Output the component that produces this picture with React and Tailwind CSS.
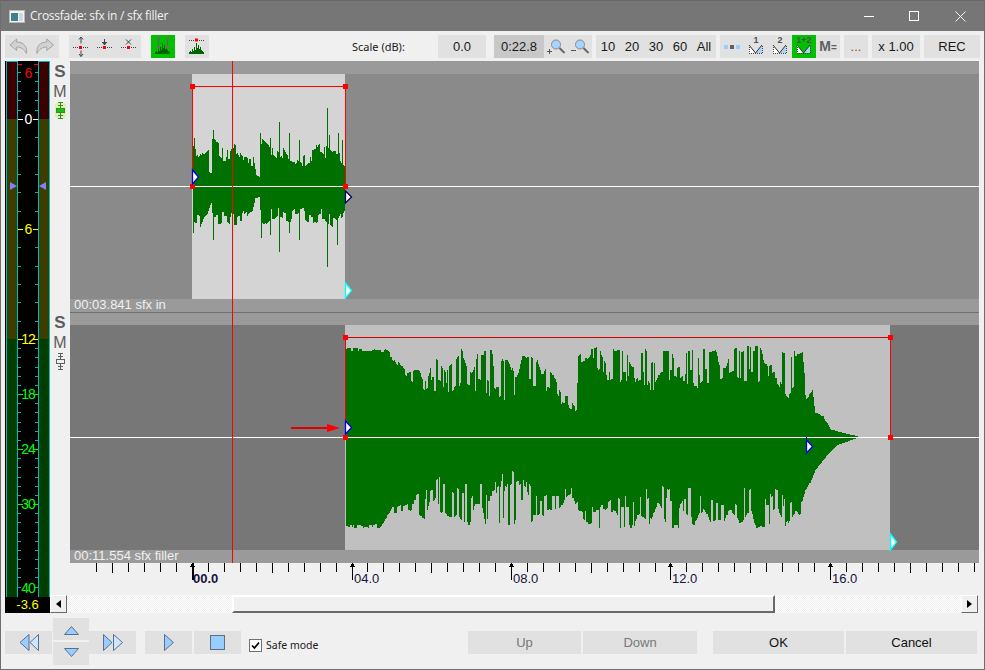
const ARIAL = 'font-["Liberation_Sans",Arial,sans-serif]'

const BTN_BG = 'bg-[#e1e1e1]'

// amplitude keypoints read off the picture, in page coordinates
// top / bottom = the solid core, outerTop / outerBottom = how far the peaks reach
const WAVE1_TOP = [[193,153],[200,152],[205,157],[208,158],[209,172],[211,173],[212,147],[217,150],[223,157],[230,158],[233,150],[240,157],[248,160],[253,165],[256,175],[259,177],[260,145],[267,152],[275,157],[278,160],[283,155],[293,158],[303,163],[312,157],[320,152],[327,155],[337,152],[343,165],[345,167]]
const WAVE1_BOTTOM = [[193,213],[200,218],[207,213],[211,200],[213,218],[223,215],[233,217],[243,213],[252,210],[255,198],[259,197],[261,216],[270,214],[278,208],[290,214],[303,211],[313,216],[323,211],[337,222],[343,215],[345,205]]

const WAVE1 = {
  x0: 193, x1: 345, cy: 186, seed: 7,
  top: WAVE1_TOP.map(([x, y]) => [x, y > 170 ? y : y + 5]),
  bottom: WAVE1_BOTTOM.map(([x, y]) => [x, y < 200 ? y : y - 5]),
  outerTop: WAVE1_TOP.map(([x, y]) => [x, y - (y > 170 ? 0 : 9)]),
  outerBottom: WAVE1_BOTTOM.map(([x, y]) => [x, y + (y < 200 ? 0 : 9)]),
  spikesTop: { 194: 138, 213: 130, 233: 148, 260: 133, 270: 138, 279: 122, 289: 133, 299: 140, 316: 145, 327: 108, 329: 135, 338: 133, 342: 140 },
  spikesBottom: { 193: 233, 213: 240, 261: 238, 270: 235, 279: 252, 289: 233, 299: 240, 327: 267, 337: 245 },
}

const WAVE2 = {
  x0: 346, x1: 858, cy: 437, seed: 23,
  top: [[346,353],[385,352],[393,362],[405,379],[415,388],[425,395],[440,392],[447,402],[470,395],[478,395],[493,407],[512,403],[530,395],[556,402],[570,412],[576,412],[578,368],[590,358],[605,385],[640,385],[653,402],[675,385],[690,392],[710,385],[730,385],[757,385],[770,380],[788,405],[800,395],[805,402],[812,392],[815,413],[823,418],[830,430],[843,433],[857,436]],
  bottom: [[346,524],[380,524],[392,507],[407,500],[420,490],[445,470],[460,480],[490,480],[512,465],[530,480],[545,490],[563,490],[577,477],[578,505],[595,505],[617,490],[640,490],[655,478],[675,490],[690,485],[710,490],[730,492],[755,480],[788,490],[805,485],[810,483],[815,470],[827,455],[837,445],[857,438]],
  outerTop: [[346,348],[385,348],[395,358],[408,372],[425,362],[432,352],[445,368],[452,350],[470,346],[490,350],[520,350],[545,358],[568,395],[576,410],[578,355],[590,344],[625,350],[640,346],[680,344],[720,348],[745,344],[770,347],[802,349],[806,395],[812,388],[815,411],[823,416],[830,429],[843,433],[857,436]],
  outerBottom: [[346,528],[380,528],[392,515],[407,510],[428,525],[445,515],[470,530],[490,525],[520,528],[545,515],[577,505],[578,518],[595,531],[640,528],[680,529],[720,525],[745,529],[790,529],[803,515],[806,490],[815,470],[827,455],[837,445],[857,438]],
  spikesTop: {},
  spikesBottom: {},
}

function interp(points, x) {
  for (let i = 1; i < points.length; i++) {
    if (x <= points[i][0]) {
      const [ax, ay] = points[i - 1]
      const [bx, by] = points[i]
      return ay + ((by - ay) * (x - ax)) / (bx - ax || 1)
    }
  }
  return points[points.length - 1][1]
}

function wavePath({ x0, x1, cy, seed, top, bottom, outerTop, outerBottom, spikesTop, spikesBottom }) {
  let s = seed
  const rand = () => {
    s = (s * 16807) % 2147483647
    return s / 2147483647
  }
  const pick = () => (rand() < 0.58 ? 0.84 + 0.16 * rand() : 0.05 + 0.45 * rand())
  // slow swell, so the peaks come in bunches with valleys between them
  const swell = (x, p) => Math.min(1, Math.max(0.5, 0.95 + 0.6 * Math.sin(x * 0.21 + p) * Math.sin(x * 0.067 + p * 2)))
  let fa = 1
  let fb = 1
  let runA = 0
  let runB = 0
  let d = ''
  for (let x = x0; x < x1; x++) {
    if (runA-- <= 0) {
      fa = pick()
      runA = Math.floor(rand() * 2.6)
    }
    if (runB-- <= 0) {
      fb = pick()
      runB = Math.floor(rand() * 2.6)
    }
    const coreA = cy - interp(top, x)
    const coreB = interp(bottom, x) - cy
    const a = coreA + Math.max(0, cy - interp(outerTop, x) - coreA) * fa * swell(x, 0.4)
    const b = coreB + Math.max(0, interp(outerBottom, x) - cy - coreB) * fb * swell(x, 1.9)
    const y1 = spikesTop[x] ?? Math.round(cy - a)
    const y2 = spikesBottom[x] ?? Math.round(cy + b)
    d += `M${x} ${y1}h1V${y2}h-1z`
  }
  return d
}

function Marker({ x, y, h = 14, color = '#0000e0' }) {
  return (
    <polygon
      points={`${x + 0.5},${y} ${x + 6.5},${y + h / 2} ${x + 0.5},${y + h}`}
      fill="#fff"
      stroke={color}
      strokeWidth="1.3"
    />
  )
}

function Handle({ x, y }) {
  return <rect x={x - 2.5} y={y - 2.5} width="5" height="5" fill="#ff0000" />
}

function Clip({ left, width, bg, wave, viewBox }) {
  return (
    <div className="flex h-[225px] flex-1">
      <div className={left} />
      <div className={`${width} ${bg}`}>
        <svg className="block h-full w-full" viewBox={viewBox} shapeRendering="crispEdges">
          <path d={wavePath(wave)} fill="#007000" />
        </svg>
      </div>
    </div>
  )
}

function ChannelIcon({ active }) {
  const c = active ? '#3f8a1c' : '#606060'
  return (
    <svg width="11" height="17" viewBox="0 0 11 17" className="block" shapeRendering="crispEdges">
      {active && <rect x="0" y="1" width="11" height="15" rx="3" fill="#d6f2b8" />}
      <path d="M3 0.500h5M5.500 0.500v6M3 3.500h5M5.500 10.500v6M3 16.500h5M3 13.500h5" stroke={c} fill="none" />
      <rect x="1.500" y="6.500" width="8" height="4" fill={active ? '#16c016' : '#f0f0f0'} stroke={c} />
    </svg>
  )
}

function SideButtons({ active, top }) {
  return (
    <div className={`flex w-[20px] flex-col items-center bg-[#f0f0f0] ${ARIAL} text-[#5c5c5c] ${top}`}>
      <span className="h-[20px] text-[17px] leading-[20px] font-bold">S</span>
      <span className="h-[20px] text-[16px] leading-[20px]">M</span>
      <ChannelIcon active={active} />
    </div>
  )
}

function Track({ label, body, children, active, h, stripe, top }) {
  return (
    <div className={`flex ${h}`}>
      <SideButtons active={active} top={top} />
      <div className="flex w-[909px] flex-col">
        <div className={`${stripe} bg-[#9a9a9a]`} />
        <div className={`flex h-[225px] ${body}`}>{children}</div>
        <div className={`h-[13px] bg-[#9a9a9a] pl-[4px] ${ARIAL} text-[13px] leading-[11px] text-[#f0f0f0]`}>{label}</div>
      </div>
    </div>
  )
}

const METER_LABELS = [
  { text: '6', cls: 'top-[4px] text-[#ff0000]' },
  { text: '0', cls: 'top-[50px] text-white' },
  { text: '6', cls: 'top-[160px] text-[#ffff00]' },
  { text: '12', cls: 'top-[270px] text-[#ffff00]' },
  { text: '18', cls: 'top-[325px] text-[#00ff00]' },
  { text: '24', cls: 'top-[380px] text-[#00ff00]' },
  { text: '30', cls: 'top-[435px] text-[#00ff00]' },
  { text: '40', cls: 'top-[519px] text-[#00ff00]' },
]

function meterTicks() {
  const ys = []
  for (let i = 0; i < 6; i++) ys.push(119 - i * 9.4)
  for (let i = 1; i < 12; i++) ys.push(119 + i * 18.33)
  for (let i = 0; i < 28; i++) ys.push(339 + i * 9.17)
  return ys.map((y) => Math.round(y) - 61)
}

const MAJOR_TICKS = [
  { y: 58, c: '#ffffff' },
  { y: 168, c: '#ffff00' },
  { y: 278, c: '#ffff00' },
  { y: 333, c: '#00ff00' },
  { y: 388, c: '#00ff00' },
  { y: 443, c: '#00ff00' },
]

function MeterBar() {
  return (
    <div className="flex h-full w-[12px] flex-col border border-b-0 border-[#00bcbc]">
      <div className="h-[57px] bg-[#3d0000]" />
      <div className="h-[220px] bg-[#3d3d00]" />
      <div className="flex-1 bg-[#003d00]" />
    </div>
  )
}

function Meter() {
  return (
    <div className="flex w-[45px] flex-col bg-black">
      <div className="relative flex h-[536px] pl-px">
        <MeterBar />
        <div className="w-[20px]" />
        <MeterBar />
        <svg className="absolute inset-0" width="45" height="536" shapeRendering="crispEdges">
          {meterTicks().map((y) => (
            <path key={y} d={`M13 ${y}.5h3M30 ${y}.5h3`} stroke="#00b4b4" />
          ))}
          <path d="M13 3.500h4M29 3.500h4" stroke="#ff0000" />
          {MAJOR_TICKS.map((t) => (
            <path key={t.y} d={`M13 ${t.y}.5h5M28 ${t.y}.5h5`} stroke={t.c} />
          ))}
          <g shapeRendering="auto">
            <polygon points="5,121 5,129 12,125" fill="#8080ff" />
            <polygon points="41,121 41,129 34,125" fill="#8080ff" />
          </g>
        </svg>
        {METER_LABELS.map((l, i) => (
          <span
            key={i}
            className={`absolute left-0 w-[46px] text-center ${ARIAL} text-[14px] leading-[16px] tracking-[-1px] ${l.cls}`}
          >
            {l.text}
          </span>
        ))}
      </div>
      <div className={`h-[16px] text-center ${ARIAL} text-[13px] leading-[16px] text-[#ffff00]`}>-3.6</div>
    </div>
  )
}

function WaveIcon({ color = '#006400' }) {
  return (
    <path
      d="M4 19v-2h1v-1h1v1h1v-3h1v2h1v-4h1v3h1v-7h1v5h1v-3h1v4h1v-2h1v3h1v1h1v1h1v2z"
      fill={color}
      shapeRendering="crispEdges"
    />
  )
}

function Icon24({ children, className = '' }) {
  return (
    <svg width="24" height="23" viewBox="0 0 24 23" className={`block shrink-0 ${className}`}>
      {children}
    </svg>
  )
}

function DotLine({ y = 12 }) {
  return <path d={`M4 ${y}.5h16`} stroke="#444" strokeDasharray="1 1" shapeRendering="crispEdges" />
}

function ToolIcons() {
  return (
    <div className={`flex w-[72px] ${BTN_BG}`}>
      <Icon24>
        <DotLine />
        <path d="M12 9V2.500M12 16v6M10 5l2-2.500L14 5M10 19.500l2 2.500 2-2.500" transform="translate(0 -0.500)" stroke="#444" fill="none" />
        <rect x="10" y="11" width="3" height="3" fill="#f00" />
      </Icon24>
      <Icon24>
        <DotLine />
        <path d="M11.500 4v6M9 7.500h5M9.500 7l2 3 2-3" stroke="#444" fill="none" />
        <rect x="10" y="11" width="3" height="3" fill="#f00" />
      </Icon24>
      <Icon24>
        <DotLine />
        <path d="M9 4.500l5 5M14 4.500l-5 5" stroke="#444" fill="none" />
        <rect x="10" y="11" width="3" height="3" fill="#f00" />
      </Icon24>
    </div>
  )
}

function Zoom({ minus }) {
  return (
    <Icon24>
      <circle cx="12" cy="9.500" r="4.500" fill="#a6d4ff" stroke="#8a8a8a" />
      <path d="M15.500 13l5 5" stroke="#666" strokeWidth="2" />
      <path d={minus ? 'M3 15.500h5' : 'M3 16.500h5M5.500 14v5'} stroke="#555" />
    </Icon24>
  )
}

function FadeIcon({ label, on }) {
  return (
    <Icon24 className={on ? 'bg-[#00c000]' : ''}>
      <text x="12" y="8" textAnchor="middle" fontSize="9" fontWeight="bold" fill="#505050" fontFamily="Liberation Sans">
        {label}
      </text>
      <polygon points="5,10 11.500,18 5,18" fill="#fff" />
      <polygon points="18,10 11.500,18 18,18" fill="#a6d4ff" />
      <path d="M5 10l6.500 8L18 10" stroke="#333" fill="none" />
      <path d="M5.500 10v8.500h13V10" stroke="#444" strokeDasharray="1 1" fill="none" shapeRendering="crispEdges" />
    </Icon24>
  )
}

const UNDO = 'M5 10L11.700 4v3C18 7 22.500 11 21.500 18.500 19 14 16 12 11.700 12v3.500z'

function Toolbar() {
  return (
    <div className={`flex h-[30px] items-start bg-[#f0f0f0] pt-[4px] pl-[4px] ${ARIAL} text-[13px] text-[#1a1a1a]`}>
      <div className={`flex h-[23px] w-[54px] ${BTN_BG}`}>
        <svg width="54" height="23" viewBox="0 0 54 23" className="block">
          <path d={UNDO} fill="#d2d2d2" stroke="#a4a4a4" />
          <path d={UNDO} fill="#d2d2d2" stroke="#a4a4a4" transform="translate(53.500 0) scale(-1 1)" />
        </svg>
      </div>
      <div className="ml-[10px] h-[23px]">
        <ToolIcons />
      </div>
      <div className="ml-[10px] h-[23px] bg-[#00c000]">
        <Icon24>
          <WaveIcon />
          <path d="M7.500 5v6M16.500 5v6" stroke="#555" strokeDasharray="1 1" />
          <rect x="6" y="2.500" width="3" height="3" fill="#6a6a6a" />
          <rect x="15" y="2.500" width="3" height="3" fill="#6a6a6a" />
          <rect x="6" y="10.500" width="3" height="3" fill="#6a6a6a" />
          <rect x="15" y="10.500" width="3" height="3" fill="#6a6a6a" />
        </Icon24>
      </div>
      <div className={`ml-[10px] h-[23px] ${BTN_BG}`}>
        <Icon24>
          <WaveIcon />
          <DotLine y={5} />
          <rect x="10" y="3.500" width="3" height="3" fill="#f00" />
        </Icon24>
      </div>
      <div className='ml-[143px] h-[23px] w-[86px] font-["Noto_Sans",sans-serif] text-[11px] leading-[24px]'>Scale (dB):</div>
      <div className={`h-[23px] w-[48px] text-center leading-[23px] ${BTN_BG}`}>0.0</div>
      <div className="ml-[8px] h-[23px] w-[50px] bg-[#c8c8c8] text-center leading-[23px]">0:22.8</div>
      <div className={`flex h-[23px] w-[48px] ${BTN_BG}`}>
        <Zoom />
        <Zoom minus />
      </div>
      <div className={`ml-[4px] flex h-[23px] w-[120px] ${BTN_BG}`}>
        {['10', '20', '30', '60', 'All'].map((t) => (
          <span key={t} className="w-[24px] text-center leading-[23px]">
            {t}
          </span>
        ))}
      </div>
      <div className={`ml-[4px] flex h-[23px] w-[120px] ${BTN_BG}`}>
        <Icon24>
          <rect x="4" y="10" width="4" height="4" fill="#99ccff" />
          <rect x="10" y="10" width="4" height="4" fill="#606060" />
          <rect x="16" y="10" width="4" height="4" fill="#99ccff" />
        </Icon24>
        <FadeIcon label="1" />
        <FadeIcon label="2" />
        <FadeIcon label="1+2" on />
        <span className="flex w-[24px] items-baseline justify-center leading-[23px] text-[#606060]">
          <span className="text-[14px] font-bold">M</span>
          <span className="text-[10px] font-bold">=</span>
        </span>
      </div>
      <div className={`ml-[4px] h-[23px] w-[24px] text-center leading-[23px] text-[#a05000] ${BTN_BG}`}>...</div>
      <div className={`ml-[4px] h-[23px] w-[48px] text-center leading-[23px] ${BTN_BG}`}>x 1.00</div>
      <div className={`ml-[4px] h-[23px] w-[56px] text-center leading-[23px] ${BTN_BG}`}>REC</div>
    </div>
  )
}

function TrackOverlay() {
  return (
    <svg
      className="pointer-events-none absolute top-0 left-[20px]"
      width="909"
      height="502"
      viewBox="70 61 909 502"
      shapeRendering="crispEdges"
    >
      <path d="M70 186.500h909M70 437.500h909" stroke="#fff" strokeWidth="1" />

      <path d="M192.500 86.500h153M192.500 86v100M345.500 86v100" stroke="#ff0000" fill="none" />
      <Handle x={192.500} y={86.500} />
      <Handle x={345.500} y={86.500} />
      <Handle x={192.500} y={186.500} />
      <Handle x={345.500} y={186.500} />

      <path d="M345.500 337.500h545" stroke="#d80000" fill="none" />
      <path d="M345.500 337v100M890.500 337v100" stroke="#ff0000" fill="none" />
      <Handle x={345.500} y={337.500} />
      <Handle x={890.500} y={337.500} />
      <Handle x={345.500} y={437.500} />
      <Handle x={890.500} y={437.500} />

      <g shapeRendering="auto">
        <Marker x={192} y={170} />
        <Marker x={345} y={191} h={12} color="#000060" />
        <Marker x={345} y={283} h={15} color="#00ffff" />
        <Marker x={345} y={421} h={13} />
        <Marker x={806} y={440} h={13} />
        <Marker x={890} y={534} h={16} color="#00ffff" />
      </g>
      <path d="M806.500 437v16" stroke="#0000e0" />

      <path d="M291 427.500h38" stroke="#e00000" strokeWidth="2" />
      <polygon points="327,424 340,428 327,432" fill="#ff0000" shapeRendering="auto" />

      <path d="M232.500 61v502" stroke="#ff0000" />
    </svg>
  )
}

function Ruler() {
  const ticks = []
  for (let i = -6; i < 50; i++) {
    if (i % 10 === 0) continue
    ticks.push({ x: Math.round(i * 15.95) + 122, long: i % 5 === 0 })
  }
  const arrows = [122, 282, 441, 600, 760]
  const labels = [
    { text: '00.0', cls: 'left-[123px] font-bold' },
    { text: '04.0', cls: 'left-[284px]' },
    { text: '08.0', cls: 'left-[443px]' },
    { text: '12.0', cls: 'left-[602px]' },
    { text: '16.0', cls: 'left-[762px]' },
  ]
  return (
    <div className="relative ml-[20px] h-[32px] w-[909px]">
      <svg className="absolute inset-0" width="909" height="32" shapeRendering="crispEdges">
        {ticks.map((t) => (
          <path key={t.x} d={`M${t.x}.5 0v${t.long ? 10 : 9}`} stroke="#000" />
        ))}
        {arrows.map((x, i) => (
          <g key={x}>
            <path d={`M${x}.5 0v17`} stroke="#000" strokeWidth={i === 0 ? 2 : 1} />
            <polygon points={`${x + 0.5},0 ${x + 3.5},4 ${x - 2.5},4`} fill="#000" />
          </g>
        ))}
      </svg>
      {labels.map((l) => (
        <span key={l.text} className={`absolute top-[8px] ${ARIAL} text-[13px] leading-[16px] text-[#14143c] ${l.cls}`}>
          {l.text}
        </span>
      ))}
    </div>
  )
}

function ScrollArrow({ right }) {
  return (
    <div className="flex h-[18px] w-[17px] items-center justify-center border-t border-l border-t-white border-l-white border-r border-b border-r-[#696969] border-b-[#696969] bg-[#f0f0f0]">
      <svg width="5" height="8" viewBox="0 0 5 8" className="block">
        <polygon points={right ? '0,0 5,4 0,8' : '5,0 0,4 5,8'} fill="#000" />
      </svg>
    </div>
  )
}

function Scrollbar() {
  return (
    <div className="flex h-[18px] w-[928px]">
      <ScrollArrow />
      <div className="w-[165px] bg-[repeating-conic-gradient(#ffffff_0_25%,#eeeeee_0_50%)] bg-[length:2px_2px]" />
      <div className="h-[18px] w-[543px] border-t-2 border-l-2 border-r-2 border-b-2 border-t-white border-l-white border-r-[#696969] border-b-[#696969] bg-[#f0f0f0]" />
      <div className="flex-1 bg-[repeating-conic-gradient(#ffffff_0_25%,#eeeeee_0_50%)] bg-[length:2px_2px]" />
      <ScrollArrow right />
    </div>
  )
}

function Tri({ points }) {
  return <polygon points={points} fill="#99ccff" stroke="#5a7088" strokeWidth="1" />
}

function Transport() {
  return (
    <div className="mt-[5px] flex h-[47px] items-start pl-[4px]">
      <div className={`mt-[13px] flex h-[23px] w-[47px] items-center justify-center ${BTN_BG}`}>
        <svg width="20" height="17" viewBox="0 0 20 17" className="block">
          <Tri points="10,0.500 1,8.500 10,16.500" />
          <polygon points="19.500,0.500 11,8.500 19.500,16.500" fill="#cfe6ff" stroke="#5a7088" />
        </svg>
      </div>
      <div className="ml-px flex w-[36px] flex-col gap-[2px]">
        <div className={`flex h-[22px] items-center justify-center ${BTN_BG}`}>
          <svg width="15" height="9" viewBox="0 0 15 9" className="mt-[2px] block">
            <Tri points="0.500,8.500 7.500,0.500 14.500,8.500" />
          </svg>
        </div>
        <div className={`flex h-[23px] items-center justify-center ${BTN_BG}`}>
          <svg width="15" height="9" viewBox="0 0 15 9" className="mb-[3px] block">
            <Tri points="0.500,0.500 7.500,8.500 14.500,0.500" />
          </svg>
        </div>
      </div>
      <div className={`mt-[13px] flex h-[23px] w-[47px] items-center justify-center ${BTN_BG}`}>
        <svg width="20" height="17" viewBox="0 0 20 17" className="block">
          <Tri points="0.500,0.500 9,8.500 0.500,16.500" />
          <polygon points="10.500,0.500 19.500,8.500 10.500,16.500" fill="#cfe6ff" stroke="#5a7088" />
        </svg>
      </div>
      <div className={`mt-[13px] ml-[9px] flex h-[23px] w-[47px] items-center justify-center ${BTN_BG}`}>
        <svg width="10" height="17" viewBox="0 0 10 17" className="block">
          <Tri points="0.500,0.500 9.500,8.500 0.500,16.500" />
        </svg>
      </div>
      <div className={`mt-[13px] ml-[2px] flex h-[23px] w-[47px] items-center justify-center ${BTN_BG}`}>
        <div className="h-[15px] w-[15px] border border-[#5a7088] bg-[#99ccff]" />
      </div>
      <div className="mt-[21px] ml-[8px] flex h-[13px] w-[13px] items-center justify-center border border-[#707070] bg-white">
        <svg width="9" height="9" viewBox="0 0 9 9" className="block">
          <path d="M1 4.500l2.500 2.500L8 1.500" stroke="#000" strokeWidth="1.700" fill="none" />
        </svg>
      </div>
      <span className='mt-[19px] ml-[4px] font-["Noto_Sans",sans-serif] text-[10.5px] leading-[17px] text-[#1a1a1a]'>Safe mode</span>

      <div className={`mt-[13px] ml-auto mr-[7px] flex gap-[2px] ${ARIAL} text-[13px] leading-[23px]`}>
        <div className={`h-[23px] w-[113px] text-center text-[#787878] ${BTN_BG}`}>Up</div>
        <div className={`mr-[14px] h-[23px] w-[114px] text-center text-[#787878] ${BTN_BG}`}>Down</div>
        <div className={`h-[23px] w-[131px] text-center text-[#111] ${BTN_BG}`}>OK</div>
        <div className={`h-[23px] w-[131px] text-center text-[#111] ${BTN_BG}`}>Cancel</div>
      </div>
    </div>
  )
}

export default function App() {
  return (
    <div className="flex h-[670px] w-[985px] flex-col overflow-hidden border-x border-b border-[#6e6e6e] bg-[#f0f0f0]">
      <div className="flex h-[31px] shrink-0 items-center border-t border-[#666] bg-[#767676]">
        <svg width="16" height="13" viewBox="0 0 16 13" className="ml-[8px] block">
          <rect x="0.500" y="0.500" width="15" height="12" fill="#f4f4f4" stroke="#b8b8b8" />
          <rect x="2" y="3" width="7" height="8" fill="#3f7f88" />
          <rect x="10" y="3" width="4" height="8" fill="#cdd9e2" />
        </svg>
        <span className='ml-[5px] font-["Open_Sans",sans-serif] text-[12px] tracking-[-0.27px] text-[#f2f2f2]'>Crossfade: sfx in / sfx filler</span>
        <div className="ml-auto flex items-center">
          <div className="mr-[35px] h-px w-[10px] bg-white" />
          <div className="mr-[36px] h-[10px] w-[10px] border border-white" />
          <svg width="11" height="11" viewBox="0 0 11 11" className="mr-[18px] block">
            <path d="M0.500 0.500l10 10M10.500 0.500l-10 10" stroke="#f2f2f2" fill="none" />
          </svg>
        </div>
      </div>

      <Toolbar />

      <div className="flex pl-[4px]">
        <Meter />
        <div className="flex flex-col">
          <div className="relative flex flex-col">
            <Track h="h-[251px]" stripe="h-[13px]" top="pt-px" active label="00:03.841 sfx in" body="bg-[#8a8a8a]">
              <Clip left="w-[122px]" width="w-[153px]" bg="bg-[#d4d4d4]" viewBox="192 74 153 225" wave={WAVE1} />
            </Track>
            <div className="ml-[20px] h-px bg-[#707070]" />
            <Track h="h-[250px]" stripe="h-[12px]" top="pt-0" label="00:11.554 sfx filler" body="bg-[#777777]">
              <Clip left="w-[275px]" width="w-[545px]" bg="bg-[#c0c0c0]" viewBox="345 325 545 225" wave={WAVE2} />
            </Track>
            <TrackOverlay />
          </div>
          <Ruler />
          <Scrollbar />
        </div>
      </div>

      <Transport />
    </div>
  )
}
